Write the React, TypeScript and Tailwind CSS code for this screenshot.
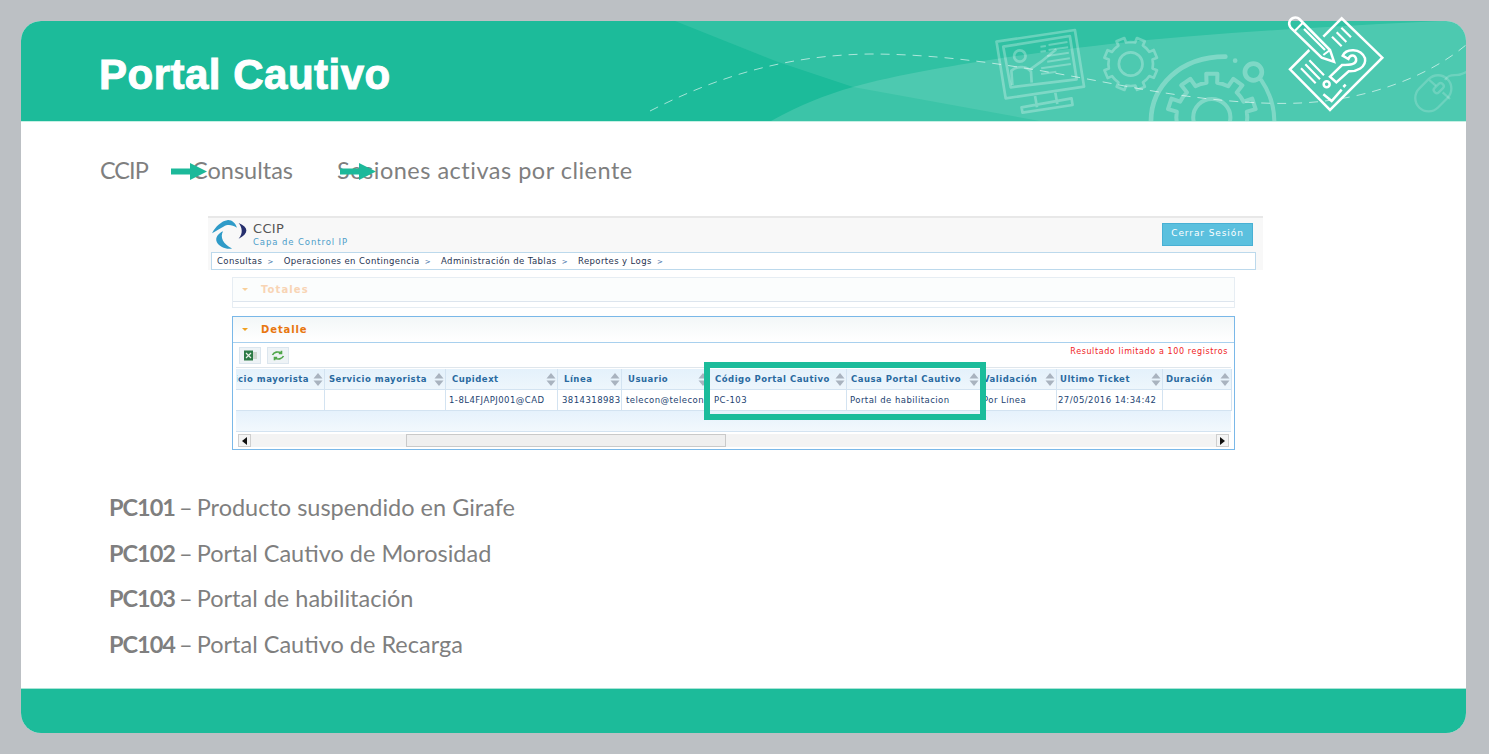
const gearPath = (cx: number, cy: number, inner: number, outer: number, teeth: number, rot = 0) => {
  const pts: string[] = [];
  const step = (Math.PI * 2) / teeth;
  for (let i = 0; i < teeth; i++) {
    const a = rot + i * step;
    const p = (r: number, t: number) => {
      const x = cx + r * Math.cos(a + t * step);
      const y = cy + r * Math.sin(a + t * step);
      return `${x.toFixed(1)} ${y.toFixed(1)}`;
    };
    pts.push(p(inner, -0.5), p(inner, -0.24), p(outer, -0.2), p(outer, 0.2), p(inner, 0.24));
  }
  return `M${pts.join("L")}Z`;
};

function HeaderArt() {
  return (
    <svg className="absolute inset-0 h-full w-full" viewBox="21 21 1445 100" fill="none">
      <path d="M675 21 L778 62 L853 87 L1040 121 L1466 121 L1466 21Z" fill="#fff" fillOpacity="0.09" />
      <path d="M771 121 C800 105 825 95 853 87 C920 68 1040 52 1110 44 C1220 32 1340 26 1440 21 L1466 21 L1466 121Z" fill="#fff" fillOpacity="0.14" />
      <path
        d="M650 111 C720 75 790 55 870 54 C960 54 1050 72 1130 87 C1200 100 1260 105 1300 103 C1370 100 1430 75 1466 45"
        stroke="#fff"
        strokeOpacity="0.6"
        strokeDasharray="9 7"
      />
      {/* monitor, gears: drawn in crop coordinates */}
      <g transform="translate(960 0) scale(0.338 0.3333)" stroke="#fff" strokeOpacity="0.28" strokeWidth="8" strokeLinejoin="round">
        <path d="M108 125 L340 90 L367 260 L135 295Z" />
        <path d="M128 140 L325 108 L345 238 L150 262Z" />
        <path d="M222 288 L228 322 M282 278 L288 312 M182 322 L330 295 L333 315 L185 338Z" />
        <circle cx="177" cy="168" r="17" />
        <path d="M155 255 L152 212 C170 195 200 200 210 215 L212 248 M205 210 L240 185 L285 148" />
        <path d="M238 140 L254 138 M262 135 L318 126 M238 155 L254 153 M262 150 L320 142 M258 168 L322 158 M258 185 L325 175 M240 205 L328 192 M240 222 L285 215" strokeWidth="6" />
        <path d={gearPath(505, 192, 66, 80, 8, 0.39)} />
        <circle cx="505" cy="192" r="35" />
        <path d="M565 365 C565 260 650 170 785 170" strokeWidth="14" strokeLinecap="round" />
        <circle cx="814" cy="182" r="7" fill="#fff" fillOpacity="0.28" stroke="none" />
        <circle cx="868" cy="216" r="25" strokeWidth="14" />
        <path d="M890 238 C915 275 930 320 930 365" strokeWidth="12" />
        <path d={gearPath(745, 352, 105, 132, 10, -1.57)} strokeWidth="12" />
        <circle cx="745" cy="352" r="55" strokeWidth="12" />
      </g>
      <g transform="translate(1270 5) scale(0.3333)" stroke="#fff" strokeOpacity="0.18" strokeWidth="7">
        <rect x="430" y="225" width="120" height="80" rx="40" transform="rotate(-45 490 265)" />
        <rect x="490" y="240" width="34" height="18" rx="8" transform="rotate(-45 507 250)" />
        <path d="M478 225 L498 243 M518 262 L540 282 M525 225 C540 200 560 220 590 200" />
      </g>
    </svg>
  );
}

function MainIcon() {
  return (
    <svg className="absolute left-[1249px] top-[-16px] h-[125px] w-[219px] overflow-visible" viewBox="0 0 657 375" fill="none">
      <g stroke="#fff" strokeWidth="7.5" strokeLinejoin="miter">
        {/* paper */}
        <path d="M160 95 L215 40 L337 158 L180 315 L60 193 L118 135" />
        {/* pencil */}
        <path d="M88 42 L180 135 L192 170 L155 158 L62 68 C52 55 60 40 72 38 C78 37 84 38 88 42Z" />
        <path d="M72 80 L100 52 M102 72 L165 135 M160 150 L180 135" strokeWidth="6.5" />
        {/* written lines */}
        <path d="M186 95 L215 124 M200 82 L229 111 M214 68 L243 97" strokeWidth="6.5" />
        <path d="M93 190 L137 235 M106 178 L150 223 M118 166 L162 211" strokeWidth="6.5" />
        {/* question mark */}
        <path d="M218 152 C228 130 272 128 285 160 C290 188 258 200 236 199 L199 232 L180 215 L216 180 C238 180 262 180 258 160 C254 148 240 148 235 162Z" />
        <circle cx="170" cy="238" r="9" />
        <path d="M160 268 L185 288 L215 254 M220 246 L227 239" />
      </g>
    </svg>
  );
}

function CcipLogo() {
  return (
    <svg className="h-[32px] w-[38px] shrink-0" viewBox="15 22 110 92">
      <path d="M18 66 C28 46 46 30 62 28 C74 26 86 36 90 50 C76 40 62 40 52 46 C40 52 28 60 18 66Z" fill="#2f9bc8" />
      <path d="M50 60 C40 76 50 98 76 110 C60 114 40 106 32 92 C26 78 36 66 50 60Z" fill="#2f9bc8" />
      <path d="M95 36 C125 48 125 66 95 82 C108 66 106 50 95 36Z" fill="#27306e" />
    </svg>
  );
}

function SortArrows() {
  return (
    <svg className="h-[13px] w-[10px] shrink-0" viewBox="0 0 10 13">
      <path d="M5 0 L9.5 5.5 H0.5Z M5 13 L9.5 7.5 H0.5Z" fill="#a9b3bf" />
    </svg>
  );
}

const columns = [
  { label: "Servicio mayorista", cell: "", clip: true, pad: "pl-[1px]", cellPad: "pl-[1px]" },
  { label: "Servicio mayorista", cell: "", pad: "pl-[4px]", cellPad: "pl-[4px]" },
  { label: "Cupidext", cell: "1-8L4FJAPJ001@CAD", pad: "pl-[6px]", cellPad: "pl-[3px]" },
  { label: "Línea", cell: "3814318983", pad: "pl-[6px]", cellPad: "pl-[4px]" },
  { label: "Usuario", cell: "telecon@telecon", pad: "pl-[6px]", cellPad: "pl-[4px]" },
  { label: "Código Portal Cautivo", cell: "PC-103", pad: "pl-[5px]", cellPad: "pl-[4px]" },
  { label: "Causa Portal Cautivo", cell: "Portal de habilitacion", pad: "pl-[4px]", cellPad: "pl-[3px]" },
  { label: "Validación", cell: "Por Línea", pad: "pl-[2px]", cellPad: "pl-[2px]" },
  { label: "Ultimo Ticket", cell: "27/05/2016 14:34:42", pad: "pl-[3px]", cellPad: "pl-[1px]" },
  { label: "Duración", cell: "", pad: "pl-[3px]", cellPad: "pl-[3px]" },
];

const codes = [
  { code: "PC101", text: "Producto suspendido en Girafe" },
  { code: "PC102", text: "Portal Cautivo de Morosidad" },
  { code: "PC103", text: "Portal de habilitación" },
  { code: "PC104", text: "Portal Cautivo de Recarga" },
];

const navItems = ["Consultas", "Operaciones en Contingencia", "Administración de Tablas", "Reportes y Logs"];

function Arrow({ className }: { className: string }) {
  return (
    <svg className={`absolute h-[17px] w-[36px] ${className}`} viewBox="0 0 36 17">
      <path d="M0 5.5 H19 V0 L36 8.5 L19 17 V11.5 H0Z" fill="#1cb99a" />
    </svg>
  );
}

function DetailTable() {
  return (
    <div className="mx-[3px] border-t border-[#dfe6ec] pt-[1px]">
      <div className="grid grid-cols-[89px_121px_112px_64px_88px_137px_134px_76px_106px_69px] font-['DejaVu_Sans',sans-serif] text-[8.5px]">
        {columns.map((col) => (
          <div
            key={"h" + col.label + col.pad}
            className={`flex h-[21px] items-center justify-between overflow-hidden border-r border-b border-[#d3e3f1] bg-gradient-to-b from-[#e4f1fb] to-[#eef6fc] pr-[1px] ${col.pad}`}
          >
            {col.clip ? (
              <span className="w-[72px] overflow-hidden whitespace-nowrap font-bold tracking-[0.5px] text-[#2a6aa0] [direction:rtl]">{col.label}</span>
            ) : (
              <span className="whitespace-nowrap font-bold tracking-[0.5px] text-[#2a6aa0]">{col.label}</span>
            )}
            <SortArrows />
          </div>
        ))}
        {columns.map((col) => (
          <div
            key={"c" + col.label + col.pad}
            className={`flex h-[21px] items-center overflow-hidden whitespace-nowrap border-r border-b border-[#d3e3f1] bg-white tracking-[0.45px] text-[#1c3f70] ${col.cellPad}`}
          >
            {col.cell}
          </div>
        ))}
      </div>
      <div className="h-[21px] border-b border-[#d3e3f1] bg-gradient-to-b from-[#e6f2fc] to-[#f2f8fd]" />
      <div className="mt-[2px] flex h-[13px] pl-[2px] pr-[2px]">
        <div className="flex w-[13px] items-center justify-center border border-[#cfcfcf] bg-[#f4f4f4]">
          <svg className="h-[8px] w-[5px]" viewBox="0 0 5 8"><path d="M5 0 V8 L0 4Z" fill="#111" /></svg>
        </div>
        <div className="w-[155px] bg-[#f3f3f3]" />
        <div className="w-[320px] border border-[#c9c9c9] bg-[#efefef]" />
        <div className="flex-1 bg-[#f3f3f3]" />
        <div className="flex w-[13px] items-center justify-center border border-[#cfcfcf] bg-[#f4f4f4]">
          <svg className="h-[8px] w-[5px]" viewBox="0 0 5 8"><path d="M0 0 V8 L5 4Z" fill="#111" /></svg>
        </div>
      </div>
    </div>
  );
}

export default function App() {
  return (
    <div className="h-[754px] w-[1489px] overflow-hidden bg-[#bcc0c4] pl-[21px] pt-[21px] font-['Lato',sans-serif]">
      <div className="relative flex h-[712px] w-[1445px] flex-col rounded-[20px] bg-white">
        <div className="relative h-[101px] shrink-0 rounded-t-[20px] border-b border-[#c6f0e4] bg-[#1cbb9a]">
          <div className="absolute inset-0 overflow-hidden rounded-t-[20px]">
            <HeaderArt />
          </div>
          <h1 className="relative pl-[78px] pt-[29px] font-['Liberation_Sans',sans-serif] text-[42px] font-bold leading-[50px] tracking-[0.5px] text-white [-webkit-text-stroke:1px_white]">
            Portal Cautivo
          </h1>
        </div>
        <MainIcon />

        <div className="flex-1">
          <div className="relative mt-[34px] flex h-[30px] items-center pl-[79px] text-[23.5px] text-[#7f7f7f]">
            <span className="w-[92px] tracking-[-1px]">CCIP</span>
            <span className="w-[145px]">Consultas</span>
            <span className="tracking-[0.5px]">Sesiones activas por cliente</span>
            <Arrow className="left-[150px] top-[7px]" />
            <Arrow className="left-[319px] top-[7px]" />
          </div>

          <div className="ml-[187px] mt-[30px] w-[1055px] font-['DejaVu_Sans',sans-serif]">
            <div className="border-t-2 border-[#e8e8e8] bg-[#f8f8f8]">
              <div className="flex h-[32px] items-center pl-[3px] pr-[10px]">
                <CcipLogo />
                <div className="ml-[4px] pt-[1px]">
                  <div className="text-[13px] leading-[15px] tracking-[0.3px] text-[#555]">CCIP</div>
                  <div className="text-[8.5px] leading-[13px] tracking-[0.9px] text-[#4d9ec9]">Capa de Control IP</div>
                </div>
                <button className="ml-auto h-[23px] w-[91px] border border-[#48b0d4] bg-[#5bc0de] text-[9px] tracking-[0.9px] text-white">Cerrar Sesión</button>
              </div>
              <div className="ml-[3px] mr-[7px] mt-[2px] flex h-[18px] items-center gap-[10px] border border-[#bcd9ec] bg-white pl-[5px] text-[8.5px] tracking-[0.4px] text-[#1f3350]">
                {navItems.map((item) => (
                  <span key={item} className="whitespace-nowrap">
                    {item} <span className="ml-[2px] text-[7px] text-[#3a6ea5]">&gt;</span>
                  </span>
                ))}
              </div>
            </div>
          </div>

          <div className="relative ml-[211px] mt-[7px] w-[1003px] font-['DejaVu_Sans',sans-serif]">
            <div className="h-[31px] border border-[#e6edf3]">
              <div className="flex h-[24px] items-center gap-[13px] border-b border-[#dde5ee] bg-[#fbfdfd] pl-[9px] text-[10px] font-bold tracking-[1.1px] text-[#f8d4b4]">
                <svg className="h-[3px] w-[6px]" viewBox="0 0 6 3"><path d="M0 0 H6 L3 3Z" fill="#f8cf9a" /></svg>
                Totales
              </div>
            </div>
            <div className="relative mt-[8px] h-[134px] border border-[#7ab8e8]">
              <div className="flex h-[25px] items-center gap-[13px] bg-gradient-to-b from-[#f3f7f8] to-white pl-[9px] text-[10px] font-bold tracking-[0.9px] text-[#e8760f]">
                <svg className="h-[3px] w-[6px]" viewBox="0 0 6 3"><path d="M0 0 H6 L3 3Z" fill="#f0a020" /></svg>
                Detalle
              </div>
              <div className="flex h-[25px] items-center justify-between border-t border-[#a8d0ee] pl-[6px] pr-[6px]">
                <div className="flex gap-[6px]">
                  <div className="flex h-[17px] w-[22px] items-center justify-center border border-[#dce6ee] bg-[#eef3f6]">
                    <svg className="h-[11px] w-[13px]" viewBox="0 0 13 11">
                      <rect width="9" height="10" y="0.5" fill="#2c7a45" />
                      <path d="M2 3 L7 8 M7 3 L2 8" stroke="#e8f0e8" strokeWidth="1.2" />
                      <rect x="9" y="2" width="4" height="7" fill="#cfd8d0" />
                    </svg>
                  </div>
                  <div className="flex h-[17px] w-[22px] items-center justify-center border border-[#dce6ee] bg-[#eef3f6]">
                    <svg className="h-[11px] w-[14px]" viewBox="0 0 14 11" fill="none" stroke="#4fa64a" strokeWidth="1.6">
                      <path d="M1.5 5 C3 2 7 1 10.5 3 M10.5 0.8 V3.4 H7.8" />
                      <path d="M12.5 6 C11 9 7 10 3.5 8 M3.5 10.2 V7.6 H6.2" />
                    </svg>
                  </div>
                </div>
                <span className="mb-[6px] text-[8px] tracking-[0.6px] text-[#f01c24]">Resultado limitado a 100 registros</span>
              </div>
              <DetailTable />
              <div className="absolute left-[471px] top-[45px] h-[58px] w-[282px] border-[6px] border-[#1bbc9b]" />
            </div>
          </div>

          <ul className="ml-[88px] mt-[35px] text-[23.5px] text-[#7f7f7f]">
            {codes.map((item) => (
              <li key={item.code} className="h-[45.5px] leading-[45.5px]">
                <span className="[word-spacing:-2px]">
                  <b className="tracking-[-1px]">{item.code}</b> –{" "}
                </span>
                {item.text}
              </li>
            ))}
          </ul>
        </div>

        <div className="h-[45px] shrink-0 rounded-b-[20px] border-t border-[#a9e4d5] bg-[#1cbb9a]" />
      </div>
    </div>
  );
}
